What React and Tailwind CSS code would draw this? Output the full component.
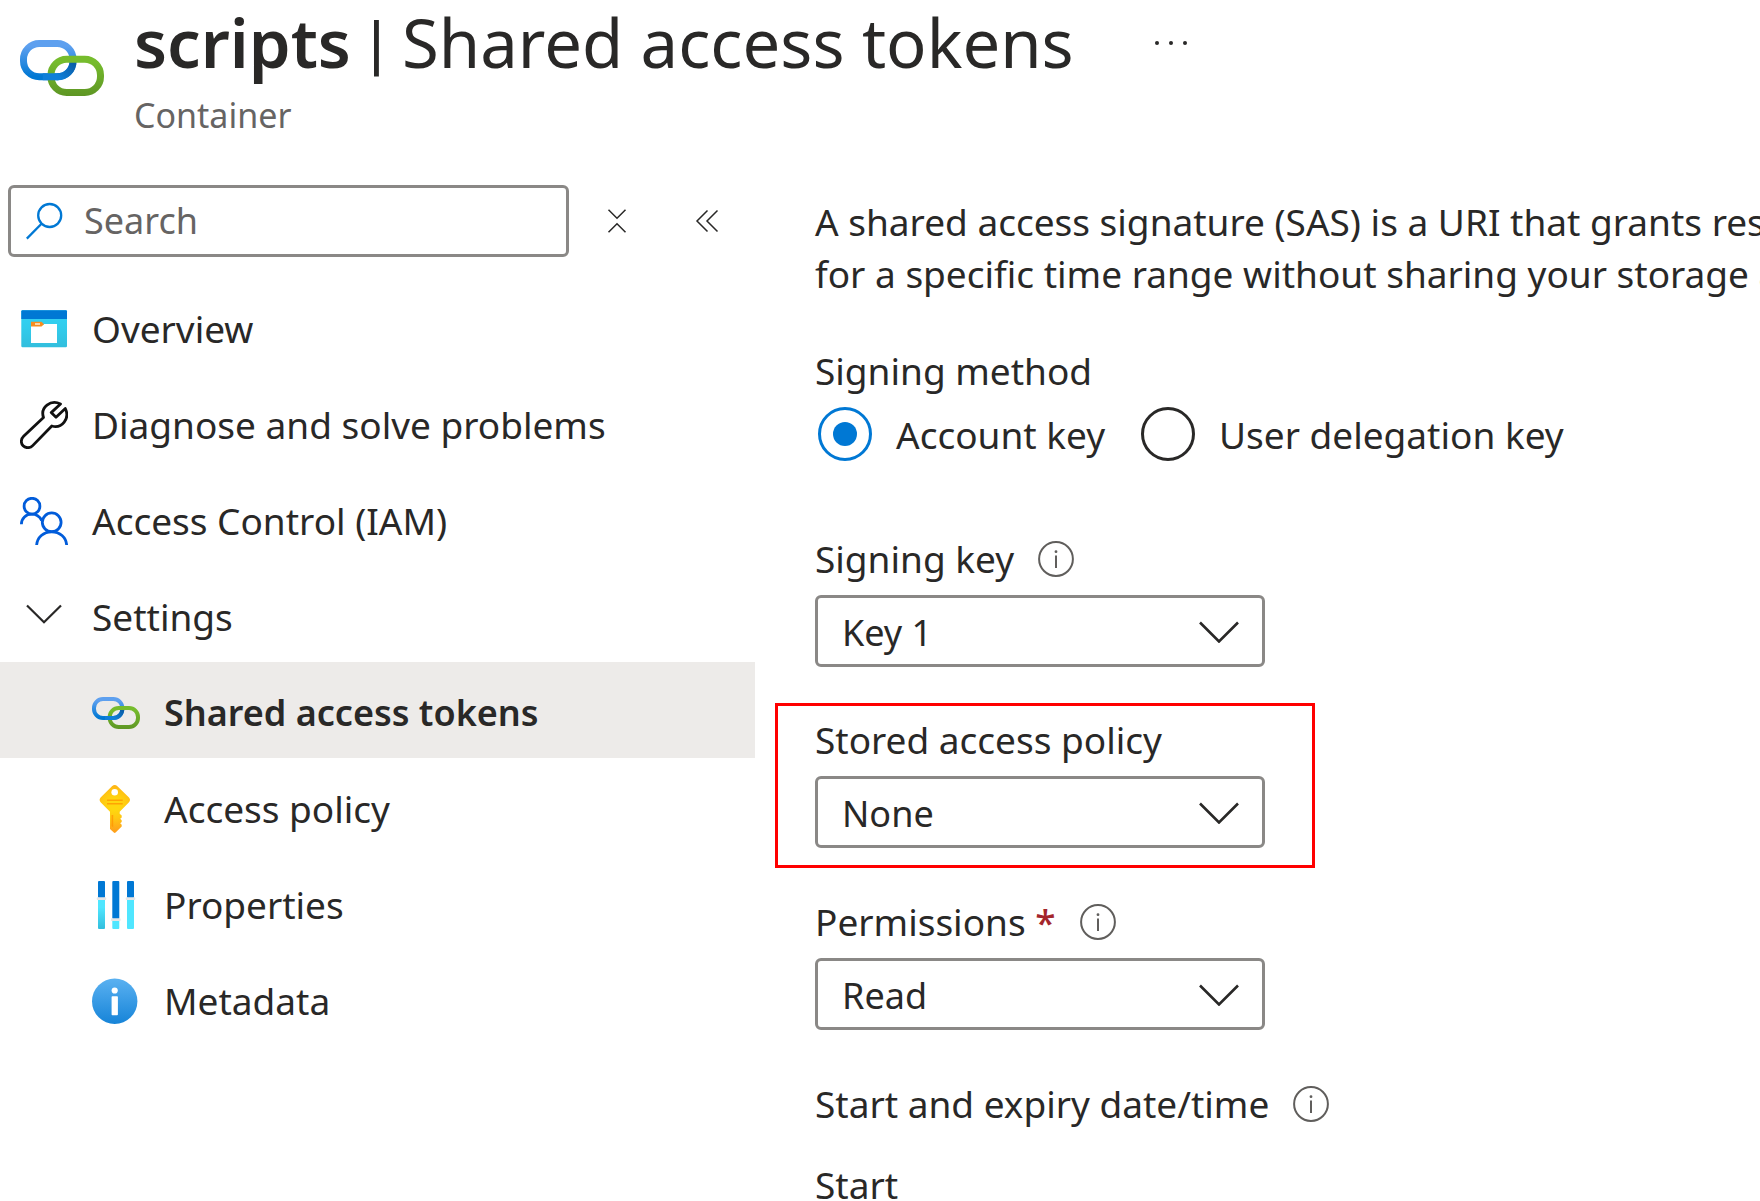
import { useState } from "react";

const MENU = [
  { id: "overview", label: "Overview", icon: OverviewIcon },
  { id: "diagnose", label: "Diagnose and solve problems", icon: WrenchIcon },
  { id: "iam", label: "Access Control (IAM)", icon: PeopleIcon },
];

const SETTINGS = [
  { id: "tokens", label: "Shared access tokens", icon: LinkIcon },
  { id: "policy", label: "Access policy", icon: KeyIcon },
  { id: "properties", label: "Properties", icon: SlidersIcon },
  { id: "metadata", label: "Metadata", icon: MetadataIcon },
];

export default function SharedAccessTokensPage() {
  const [active, setActive] = useState("tokens");
  const [open, setOpen] = useState(true);
  const [method, setMethod] = useState("account");

  return (
    <div className="h-screen overflow-hidden bg-white font-['Noto_Sans',sans-serif] text-[37px] leading-[52px] text-[#292827]">
      <header className="flex gap-[30px] pl-5">
        <LinkIcon className="mt-[26px] h-[84px] w-[84px] shrink-0" />
        <div>
          <div className="flex items-center gap-20">
            <h1 className="text-[67px] leading-[84px] whitespace-nowrap">
              <span className="font-semibold">scripts</span>{" "}
              <span className="font-['Roboto',sans-serif] leading-none">|</span> Shared access tokens
            </h1>
            <button type="button" aria-label="More actions">
              <MoreIcon />
            </button>
          </div>
          <p className="mt-3 text-[34px] leading-[38px] text-[#666463]">Container</p>
        </div>
      </header>

      <div className="flex pt-[51px]">
        <aside className="w-[755px] shrink-0">
          <div className="flex items-center pl-2">
            <label className="flex h-[72px] w-[561px] items-center gap-5 rounded-md border-3 border-[#8a8886] px-[15px]">
              <SearchIcon />
              <input
                type="text"
                aria-label="Search"
                placeholder="Search"
                className="min-w-0 flex-1 bg-transparent text-[36px] outline-none placeholder:text-[#666463]"
              />
            </label>
            <button type="button" aria-label="Collapse all" className="ml-9">
              <CollapseIcon />
            </button>
            <button type="button" aria-label="Hide menu" className="ml-[66px]">
              <HideIcon />
            </button>
          </div>

          <nav className="mt-[21px]">
            {MENU.map((item) => (
              <MenuItem
                key={item.id}
                item={item}
                active={active === item.id}
                onSelect={setActive}
              />
            ))}
            <button
              type="button"
              aria-expanded={open}
              onClick={() => setOpen(!open)}
              className="flex h-24 w-full items-center gap-6 pt-[5px] pl-5 text-left"
            >
              <ChevronIcon />
              Settings
            </button>
            {open &&
              SETTINGS.map((item) => (
                <MenuItem
                  key={item.id}
                  item={item}
                  nested
                  active={active === item.id}
                  onSelect={setActive}
                />
              ))}
          </nav>
        </aside>

        <main className="min-w-0 flex-1 overflow-hidden pt-[11px] pl-[60px]">
          <p className="whitespace-nowrap">
            A shared access signature (SAS) is a URI that grants restricted
            <br />
            for a specific time range without sharing your storage account key.
          </p>

          <fieldset className="mt-[45px]">
            <legend>Signing method</legend>
            <div className="mt-[10px] flex gap-9 pl-[3px]">
              <Radio
                label="Account key"
                value="account"
                checked={method === "account"}
                onSelect={setMethod}
              />
              <Radio
                label="User delegation key"
                value="delegation"
                checked={method === "delegation"}
                onSelect={setMethod}
              />
            </div>
          </fieldset>

          <div className="mt-[72px]">
            <SelectField id="signing-key" label="Signing key" options={["Key 1", "Key 2"]} info />
          </div>

          <div className="mt-9 -ml-10 w-[540px] border-3 border-[#ff0000] pt-2 pb-[17px] pl-[37px]">
            <SelectField id="stored-policy" label="Stored access policy" options={["None"]} />
          </div>

          <div className="mt-7">
            <SelectField
              id="permissions"
              label="Permissions"
              options={["Read", "Add", "Create", "Write", "Delete", "List"]}
              required
              info
            />
          </div>

          <h2 className="mt-12 flex items-center gap-6">
            Start and expiry date/time
            <InfoIcon />
          </h2>
          <h3 className="mt-[29px]">Start</h3>
        </main>
      </div>
    </div>
  );
}

function MenuItem({ item, nested, active, onSelect }) {
  const Icon = item.icon;
  return (
    <button
      type="button"
      onClick={() => onSelect(item.id)}
      aria-current={active ? "page" : undefined}
      className={`flex h-24 w-full items-center gap-6 pt-[5px] text-left whitespace-nowrap ${
        nested ? "pl-[92px]" : "pl-5"
      } ${active ? "bg-[#edebe9] text-[36px] font-semibold" : ""}`}
    >
      <Icon className="h-12 w-12 shrink-0" />
      {item.label}
    </button>
  );
}

function Radio({ label, value, checked, onSelect }) {
  return (
    <label className="flex items-center gap-6 whitespace-nowrap">
      <input
        type="radio"
        name="signing-method"
        value={value}
        checked={checked}
        onChange={() => onSelect(value)}
        className="grid h-[54px] w-[54px] shrink-0 appearance-none place-items-center rounded-full border-3 border-[#292827] before:h-6 before:w-6 before:rounded-full checked:border-[#0078d4] checked:before:bg-[#0078d4]"
      />
      <span className="pt-[2px]">{label}</span>
    </label>
  );
}

function SelectField({ id, label, options, required, info }) {
  return (
    <div>
      <div className="flex items-center gap-6">
        <label htmlFor={id}>
          {label}
          {required && <span className="font-medium text-[#a4262c]"> *</span>}
        </label>
        {info && <InfoIcon />}
      </div>
      <div className="relative mt-[10px] w-[450px]">
        <select
          id={id}
          className="h-[72px] w-full appearance-none rounded-md border-3 border-[#8a8886] bg-white px-6 pt-[3px] text-[36px] outline-none"
        >
          {options.map((o) => (
            <option key={o}>{o}</option>
          ))}
        </select>
        <svg
          viewBox="0 0 40 24"
          className="pointer-events-none absolute top-6 right-[26px] h-6 w-10"
          fill="none"
          stroke="currentColor"
          strokeWidth="2.6"
          aria-hidden="true"
        >
          <path d="M1 3.5 20 22.5 39 3.5" />
        </svg>
      </div>
    </div>
  );
}

function LinkIcon({ className = "h-12 w-12" }) {
  return (
    <svg viewBox="0 0 48 48" className={className} fill="none" strokeWidth="4" aria-hidden="true">
      <defs>
        <linearGradient id="link-blue" x1="0" y1="8" x2="0" y2="31" gradientUnits="userSpaceOnUse">
          <stop offset="0.15" stopColor="#5ea0ef" />
          <stop offset="0.9" stopColor="#0078d4" />
        </linearGradient>
        <linearGradient id="link-green" x1="0" y1="17" x2="0" y2="40" gradientUnits="userSpaceOnUse">
          <stop offset="0.15" stopColor="#76bc2d" />
          <stop offset="1" stopColor="#5e9624" />
        </linearGradient>
        <linearGradient id="link-shade" x1="23" y1="30" x2="31" y2="22" gradientUnits="userSpaceOnUse">
          <stop offset="0" stopColor="#0f7fd9" />
          <stop offset="1" stopColor="#0a5ea8" />
        </linearGradient>
      </defs>
      <rect x="2" y="10" width="28.3" height="19" rx="9" stroke="url(#link-blue)" />
      <path d="M30.3 20c0 5.500-4 9-9 9" stroke="url(#link-shade)" />
      <rect x="17.7" y="19" width="28.3" height="19" rx="9" stroke="url(#link-green)" />
      <path d="M13 29h9" stroke="#0f7fd9" />
    </svg>
  );
}

function OverviewIcon({ className }) {
  return (
    <svg viewBox="0 0 48 48" className={className} aria-hidden="true">
      <defs>
        <linearGradient id="overview-body" x1="0" y1="0" x2="0" y2="1">
          <stop offset="0" stopColor="#32d4f5" />
          <stop offset="0.5" stopColor="#32cbeb" />
          <stop offset="1" stopColor="#32bedd" />
        </linearGradient>
      </defs>
      <rect x="1.3" y="5.3" width="45.7" height="37" rx="1.2" fill="url(#overview-body)" />
      <path d="M2.5 5.3h43.3q1.2 0 1.2 1.2V14H1.3V6.5q0-1.2 1.2-1.200Z" fill="#0078d4" />
      <path d="M11 20h12l1-1h13v19H11Z" fill="#fff" />
      <path d="M11 16.7h10.5l2.5 2.5-2.5 2.400H11Z" fill="#f78d1e" />
      <rect x="15" y="18" width="5" height="2" fill="#fbd5a4" />
    </svg>
  );
}

function WrenchIcon({ className }) {
  return (
    <svg
      viewBox="0 0 48 48"
      className={className}
      fill="none"
      stroke="#111"
      strokeWidth="2.8"
      strokeLinejoin="round"
      aria-hidden="true"
    >
      <path d="M40.500 3C36 .8 31 1 27 4.200c-4 3.200-5 8-3.500 12.300L3.600 35.300c-2.800 2.700-3 6.900-.5 9.500 2.600 2.600 7 2.500 9.600-.2L31.800 25c4.600 1.300 9.500-.2 12.400-3.900 3.100-4 3.300-9 1.100-13.600L36 16.200l-4.800-4.600Z" />
    </svg>
  );
}

function PeopleIcon({ className }) {
  return (
    <svg
      viewBox="0 0 48 48"
      className={className}
      fill="none"
      stroke="#015cda"
      strokeWidth="2.8"
      aria-hidden="true"
    >
      <circle cx="12" cy="9.2" r="7.9" />
      <path d="M1.4 27.3c0-6 4.600-10.100 10.400-10.100 4.200 0 7.800 2.200 9.900 6.300" />
      <circle cx="31.7" cy="25.3" r="9.4" />
      <path d="M16.600 48.300c.5-8 7-13.500 15.100-13.500s14.500 5.500 15 13.500" />
    </svg>
  );
}

function ChevronIcon() {
  return (
    <svg
      viewBox="0 0 48 48"
      className="h-12 w-12 shrink-0"
      fill="none"
      stroke="currentColor"
      strokeWidth="2.2"
      aria-hidden="true"
    >
      <path d="M7 12.5 24 29.3 41 12.5" />
    </svg>
  );
}

function KeyIcon({ className }) {
  return (
    <svg viewBox="0 0 48 48" className={className} aria-hidden="true">
      <defs>
        <radialGradient id="key-fill" cx="22.7" cy="20" r="26" gradientUnits="userSpaceOnUse">
          <stop offset="0.2" stopColor="#ffd70f" />
          <stop offset="0.5" stopColor="#ffc812" />
          <stop offset="1" stopColor="#fea11b" />
        </radialGradient>
      </defs>
      <path
        d="M20 1.200q2.700-2.400 5.400 0L37 12.500q2 2.300 0 4.700l-9.300 9.500v2.100l2 1.700v2l-1.500 1.300 1.500 1.400v1.700l-1.500 1.300 1.500 1.500v1.700L23.600 47.600q-.9.800-1.800 0L18 44V26.700L8.600 17.200q-2-2.400 0-4.700Z"
        fill="url(#key-fill)"
      />
      <circle cx="22.7" cy="7.3" r="3.3" fill="#fff" />
      <path
        d="M15 14.400h15.700v1.700H15ZM15 17.900h15.700v1.700H15ZM19.600 30h1.600v12.500l-1.600-1.500Z"
        fill="#ff9300"
        opacity="0.75"
      />
    </svg>
  );
}

function SlidersIcon({ className }) {
  return (
    <svg viewBox="0 0 48 48" className={className} aria-hidden="true">
      <defs>
        <linearGradient id="slider-fill" x1="0" y1="0" x2="0" y2="1">
          <stop offset="0.3" stopColor="#50e6ff" />
          <stop offset="1" stopColor="#32bedd" />
        </linearGradient>
      </defs>
      <rect x="6" y="17" width="7" height="31" rx="1" fill="url(#slider-fill)" />
      <rect x="20.3" y="38" width="7" height="10" rx="1" fill="#50e6ff" />
      <rect x="35" y="17" width="7" height="31" rx="1" fill="#50e6ff" />
      <rect x="6" y="0" width="7" height="17" rx="1" fill="#0078d4" />
      <rect x="20.3" y="0" width="7" height="38" rx="1" fill="#0078d4" />
      <rect x="35" y="0" width="7" height="17" rx="1" fill="#0078d4" />
      <g fill="#e6e6e6">
        <rect x="4.7" y="16.2" width="9.6" height="2.8" rx="1" />
        <rect x="19" y="37.3" width="9.6" height="2.8" rx="1" />
        <rect x="33.7" y="16.2" width="9.6" height="2.8" rx="1" />
      </g>
    </svg>
  );
}

function MetadataIcon({ className }) {
  return (
    <svg viewBox="0 0 48 48" className={className} aria-hidden="true">
      <defs>
        <linearGradient id="metadata-fill" x1="0" y1="0" x2="0" y2="1">
          <stop offset="0" stopColor="#5ab1f1" />
          <stop offset="1" stopColor="#1684d8" />
        </linearGradient>
      </defs>
      <circle cx="22.7" cy="24.3" r="22.7" fill="url(#metadata-fill)" />
      <circle cx="22.7" cy="13.5" r="3.1" fill="#fff" />
      <rect x="19.6" y="19.3" width="6.3" height="19" rx="0.8" fill="#fff" />
    </svg>
  );
}

function SearchIcon() {
  return (
    <svg
      viewBox="0 0 38 38"
      className="h-[38px] w-[38px] shrink-0"
      fill="none"
      stroke="#0078d4"
      strokeWidth="2.3"
      aria-hidden="true"
    >
      <circle cx="23.7" cy="13.5" r="11.5" />
      <path d="M15.500 21.700.8 36.600" />
    </svg>
  );
}

function CollapseIcon() {
  return (
    <svg
      viewBox="0 0 24 24"
      className="h-6 w-6"
      fill="none"
      stroke="currentColor"
      strokeWidth="1.5"
      aria-hidden="true"
    >
      <path d="M3.500.7 12 9.300 20.500.7M3.500 23.300 12 14.700l8.500 8.600" />
    </svg>
  );
}

function HideIcon() {
  return (
    <svg
      viewBox="0 0 24 24"
      className="h-6 w-6"
      fill="none"
      stroke="currentColor"
      strokeWidth="1.5"
      aria-hidden="true"
    >
      <path d="M12.500 1.500 2 12l10.500 10.500M22.500 1.500 12 12l10.500 10.500" />
    </svg>
  );
}

function MoreIcon() {
  return (
    <svg viewBox="0 0 34 8" className="h-2 w-[34px]" fill="currentColor" aria-hidden="true">
      <circle cx="3" cy="5" r="2" />
      <circle cx="17" cy="5" r="2" />
      <circle cx="31" cy="5" r="2" />
    </svg>
  );
}

function InfoIcon() {
  return (
    <svg viewBox="0 0 36 36" className="h-9 w-9 shrink-0" aria-hidden="true">
      <circle cx="18" cy="18" r="16.9" fill="none" stroke="#605e5c" strokeWidth="2" />
      <circle cx="18" cy="10.7" r="1.4" fill="#605e5c" />
      <rect x="17" y="14.5" width="2" height="12.5" fill="#605e5c" />
    </svg>
  );
}
